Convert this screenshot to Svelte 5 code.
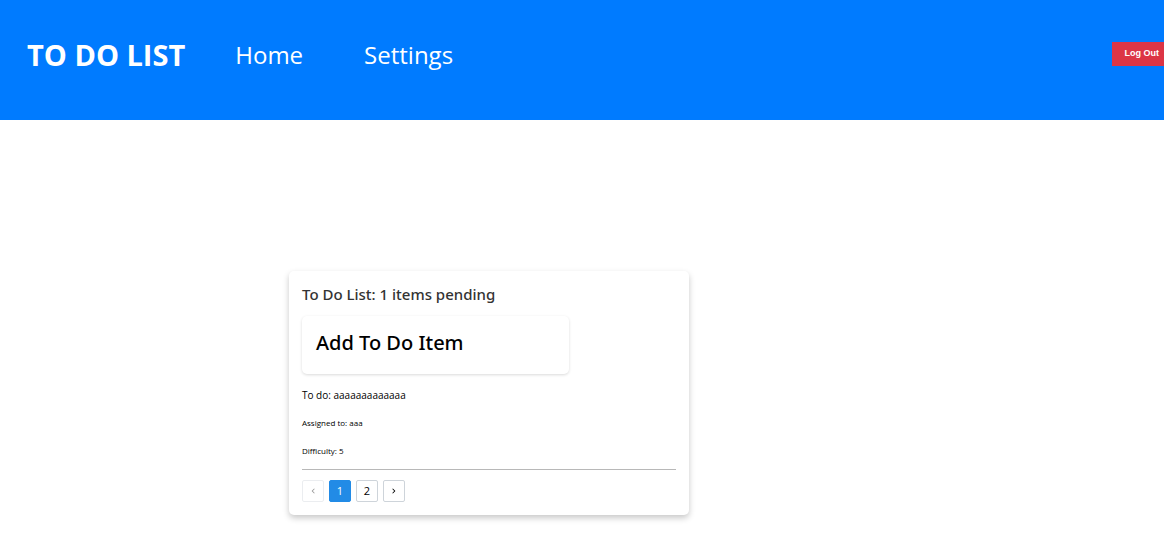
<script>
  let page = $state(1);
  const pages = [1, 2];
  const item = { text: 'aaaaaaaaaaaaa', assignee: 'aaa', difficulty: 5 };
</script>

<header>
  <h1>TO DO LIST</h1>
  <nav>
    <a href="#home">Home</a>
    <a href="#settings">Settings</a>
  </nav>
  <button class="logout" type="button">Log Out</button>
</header>

<main>
  <section class="card">
    <h2>To Do List: 1 items pending</h2>
    <div class="form-card">
      <h3>Add To Do Item</h3>
    </div>
    <article>
      <p class="todo">To do: {item.text}</p>
      <p>Assigned to: {item.assignee}</p>
      <p>Difficulty: {item.difficulty}</p>
    </article>
    <div class="pager">
      <button type="button" aria-label="Previous page" disabled={page === 1} onclick={() => page--}>
        <svg viewBox="0 0 16 16"><path d="M9.781 4.027 10.721 4.967 7.668 8.027 10.721 11.087 9.781 12.027 5.781 8.027z" /></svg>
      </button>
      {#each pages as n}
        <button type="button" class:active={page === n} onclick={() => (page = n)}>{n}</button>
      {/each}
      <button type="button" aria-label="Next page" disabled={page === pages.length} onclick={() => page++}>
        <svg viewBox="0 0 16 16"><path d="M6.219 4.027 5.279 4.967 8.332 8.027 5.279 11.087 6.219 12.027 10.219 8.027z" /></svg>
      </button>
    </div>
  </section>
</main>

<style>
  :global(body) {
    margin: 0;
    background: #fff;
    color: #000;
    font-family: 'Segoe UI', 'Open Sans', 'Noto Sans', sans-serif;
  }
  h1, h2, h3, p { margin: 0; }
  header {
    display: flex;
    align-items: flex-start;
    box-sizing: border-box;
    height: 120px;
    padding: 35px 0 0 27px;
    background: #007bff;
    color: #fff;
  }
  h1 {
    font-size: 29px;
    line-height: 40px;
    font-weight: 700;
    white-space: nowrap;
  }
  nav {
    display: flex;
    gap: 61px;
    margin-left: 50px;
    font-size: 24px;
    line-height: 40px;
  }
  nav a {
    color: inherit;
    text-decoration: none;
  }
  .logout {
    height: 24px;
    margin: 7px 0 0 auto;
    padding: 0 5px 2px 13px;
    border: 0;
    background: #dc3545;
    color: #fff;
    font: 700 9px/22px 'Liberation Sans', Arial, sans-serif;
    white-space: nowrap;
  }
  main {
    display: grid;
    grid-template-columns: 289fr minmax(400px, auto) 475fr;
    padding: 151px 0 40px;
  }
  .card {
    grid-column: 2;
    box-sizing: border-box;
    width: 400px;
    padding: 12px 13px 13px;
    border-radius: 5px;
    box-shadow: 0 3px 6px rgba(0, 0, 0, 0.22);
  }
  h2, h3 {
    font-family: 'Segoe UI', 'Noto Sans', sans-serif;
    font-weight: 500;
  }
  h2 {
    color: #333;
    font-size: 15px;
    line-height: 22px;
  }
  .form-card {
    box-sizing: border-box;
    width: 267px;
    margin-top: 11px;
    padding: 12px 14px 16px;
    border-radius: 5px;
    box-shadow: 0 1px 3px rgba(0, 0, 0, 0.15);
  }
  h3 {
    font-size: 20px;
    line-height: 30px;
  }
  article {
    display: flex;
    flex-direction: column;
    gap: 12px;
    padding: 13px 0 10px;
    border-bottom: 1px solid #b8b8b8;
  }
  p {
    font-size: 8px;
    line-height: 16px;
  }
  .todo { font-size: 10px; }
  .pager {
    display: flex;
    gap: 5px;
    padding-top: 10px;
  }
  .pager button {
    display: flex;
    align-items: center;
    justify-content: center;
    box-sizing: border-box;
    width: 22px;
    height: 22px;
    padding: 0;
    border: 1px solid #ced4da;
    border-radius: 2px;
    background: #fff;
    color: #000;
    font: 11px/20px 'Segoe UI', 'Open Sans', sans-serif;
  }
  .pager button.active {
    border-color: #228be6;
    background: #228be6;
    color: #fff;
  }
  .pager button:disabled { opacity: 0.4; }
  svg {
    width: 10px;
    height: 10px;
    fill: currentColor;
  }
</style>
